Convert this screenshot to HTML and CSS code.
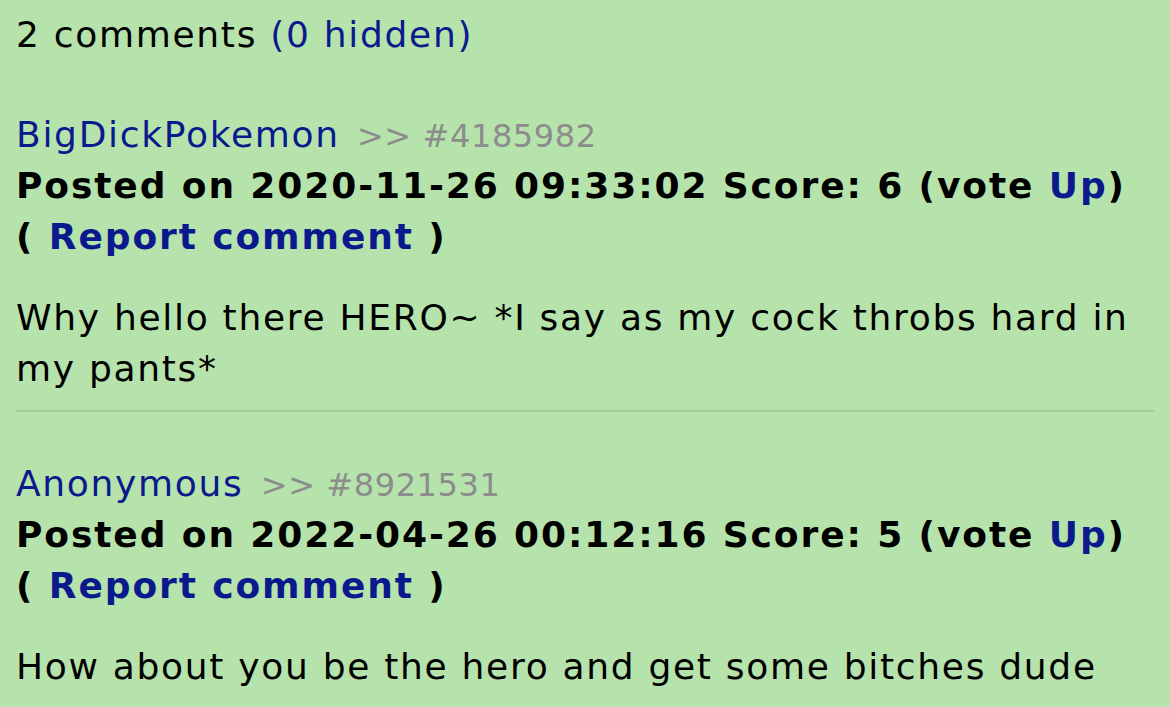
FILE: index.html
```html
<!DOCTYPE html>
<html lang="en">
<head>
    <meta charset="UTF-8">
    <meta name="viewport" content="width=device-width, initial-scale=1.0">
    <title>Comments</title>
    <link rel="stylesheet" href="styles.css">
</head>
<body>
    <div id="comments">
        <p class="count">2 comments <a href="#">(0 hidden)</a></p>

        <div class="comment">
            <div class="meta">
                <a href="#" class="user">BigDickPokemon</a> <span class="ref">&gt;&gt; #4185982</span>
                <div class="info">Posted on 2020-11-26 09:33:02 Score: 6 (vote <a href="#">Up</a>)</div>
                <div class="info">( <a href="#">Report comment</a> )</div>
            </div>
            <p class="body">Why hello there HERO~ *I say as my cock throbs hard in my pants*</p>
        </div>
        <hr>
        <div class="comment">
            <div class="meta">
                <a href="#" class="user">Anonymous</a> <span class="ref">&gt;&gt; #8921531</span>
                <div class="info">Posted on 2022-04-26 00:12:16 Score: 5 (vote <a href="#">Up</a>)</div>
                <div class="info">( <a href="#">Report comment</a> )</div>
            </div>
            <p class="body">How about you be the hero and get some bitches dude</p>
        </div>
    </div>
</body>
</html>
```

FILE: styles.css
```css
html, body { background: #b6e3ac; }
body { margin: 0; padding: 0 16px; font-family: "DejaVu Sans", Verdana, sans-serif; font-size: 36px; line-height: 51px; letter-spacing: 1.7px; color: #000; }
a { color: #0a1a8c; text-decoration: none; }
.count { margin: 9px 0 49px; }
.ref { color: #8c8c8c; font-size: 32px; line-height: 1; letter-spacing: 0.6px; margin-left: 4px; }
.info { font-weight: bold; letter-spacing: 1.9px; }
.body { margin: 30px 0 16px; }
hr { border: none; border-top: 2px solid #a3cc9a; margin: 0 0 46px; }
```
